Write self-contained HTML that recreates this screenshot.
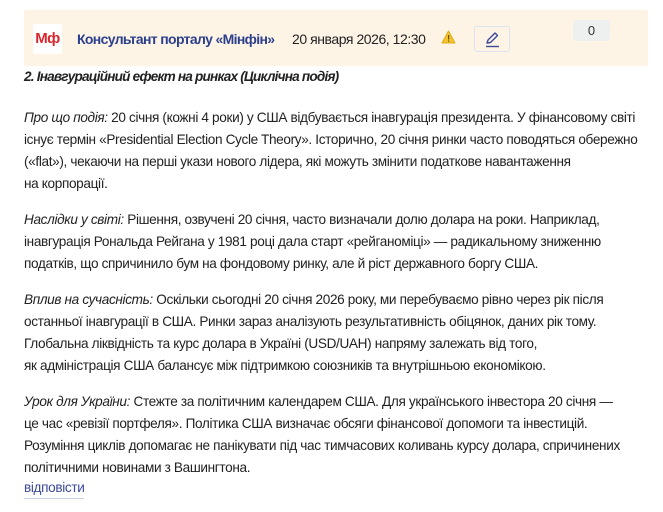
<!DOCTYPE html>
<html><head><meta charset="utf-8"><style>
body{margin:0;width:663px;height:512px;background:#fff;font-family:"Liberation Sans",sans-serif;color:#222;position:relative;overflow:hidden}
.band{position:absolute;left:24px;top:10px;width:624px;height:56px;background:#fdf4e6}
.logo{position:absolute;left:33px;top:24px;width:29px;height:30px;background:#fff;border-radius:2px;color:#d8262c;font-weight:bold;font-size:15px;line-height:30px;text-align:center;letter-spacing:-0.5px}
.name{position:absolute;left:77px;top:31px;font-size:14px;font-weight:bold;color:#2b3f8c;letter-spacing:-0.65px}
.date{position:absolute;left:292px;top:31px;font-size:14px;color:#222;letter-spacing:-0.45px}
.edit{position:absolute;left:474px;top:26px;width:36px;height:26px;border:1px solid #dde3ee;border-radius:3px;box-sizing:border-box}
.cnt{position:absolute;left:573px;top:20px;width:37px;height:21px;background:#eef0f0;border-radius:3px;font-size:13px;text-align:center;line-height:21px;color:#333}
.t{position:absolute;left:24px;font-size:13.6px;letter-spacing:-0.35px;white-space:nowrap;line-height:22px}
i{font-style:italic}
</style></head><body>
<div class="band"></div>
<div class="logo">Мф</div>
<div class="name">Консультант порталу «Мінфін»</div>
<div class="date">20 января 2026, 12:30</div>
<svg style="position:absolute;left:441px;top:30px" width="15" height="14" viewBox="0 0 15 14"><path d="M7.5 1 L14 13 H1 Z" fill="#f2c230" stroke="#e0ac1a" stroke-linejoin="round"/><rect x="7" y="5" width="1.2" height="4.5" fill="#6b5000"/><rect x="7" y="10.5" width="1.2" height="1.2" fill="#6b5000"/></svg>
<div class="edit"><svg style="position:absolute;left:9px;top:4px" width="18" height="17" viewBox="0 0 18 17"><path d="M3 12 L4 9 L11 2 L13.5 4.5 L6.5 11.5 Z" fill="none" stroke="#3b4a9a" stroke-width="1.4" stroke-linejoin="round"/><path d="M2 15.5 H15" stroke="#3b4a9a" stroke-width="1.4"/></svg></div>
<div class="cnt">0</div>
<div class="t" style="top:66px;font-weight:bold;font-style:italic;letter-spacing:-0.8px">2. Інавгураційний ефект на ринках (Циклічна подія)</div>
<div class="t" style="top:107px"><i>Про що подія:</i> 20 січня (кожні 4 роки) у США відбувається інавгурація президента. У фінансовому світі<br>існує термін «Presidential Election Cycle Theory». Історично, 20 січня ринки часто поводяться обережно<br>(«flat»), чекаючи на перші укази нового лідера, які можуть змінити податкове навантаження<br>на корпорації.</div>
<div class="t" style="top:209px"><i>Наслідки у світі:</i> Рішення, озвучені 20 січня, часто визначали долю долара на роки. Наприклад,<br>інавгурація Рональда Рейгана у 1981 році дала старт «рейганоміці» — радикальному зниженню<br>податків, що спричинило бум на фондовому ринку, але й ріст державного боргу США.</div>
<div class="t" style="top:289px"><i>Вплив на сучасність:</i> Оскільки сьогодні 20 січня 2026 року, ми перебуваємо рівно через рік після<br>останньої інавгурації в США. Ринки зараз аналізують результативність обіцянок, даних рік тому.<br>Глобальна ліквідність та курс долара в Україні (USD/UAH) напряму залежать від того,<br>як адміністрація США балансує між підтримкою союзників та внутрішньою економікою.</div>
<div class="t" style="top:391px"><i>Урок для України:</i> Стежте за політичним календарем США. Для українського інвестора 20 січня —<br>це час «ревізії портфеля». Політика США визначає обсяги фінансової допомоги та інвестицій.<br>Розуміння циклів допомагає не панікувати під час тимчасових коливань курсу долара, спричинених<br>політичними новинами з Вашингтона.</div>
<div class="t" style="top:478px;color:#3b4a9a;border-bottom:1px solid #c8d0e6;line-height:20px">відповісти</div>
</body></html>
